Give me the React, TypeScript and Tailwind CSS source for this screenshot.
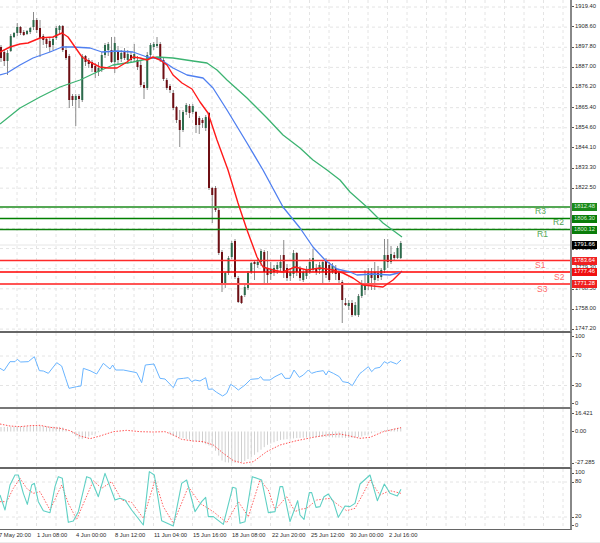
const candles: [number, number, number, number, number][] = [
[47,58,45,62,0],[52,61,50,66,0],[53,61,50,75,1],[36,51,34,52,1],[33,37,32,38,1],[27,33,23,36,1],[27,33,26,35,0],[32,35,30,36,0],[31,34,30,35,1],[28,32,27,34,1],
[20,27,12,30,1],[20,30,18,33,0],[28,38,20,57,0],[36,40,34,45,0],[39,44,37,48,0],[41,47,38,52,0],[39,45,37,50,1],[28,38,26,40,1],[26,30,25,34,1],[26,50,25,52,0],
[50,58,46,60,0],[56,100,54,108,0],[96,100,94,106,0],[96,100,94,126,1],[96,99,94,108,0],[56,100,54,102,1],[56,62,55,66,0],[60,64,58,68,0],[62,68,60,72,0],[66,72,63,78,0],
[68,72,62,76,1],[55,70,52,72,1],[45,55,43,58,1],[44,50,42,56,1],[50,62,37,63,0],[43,62,37,73,1],[52,60,46,64,0],[53,59,50,62,1],[52,58,48,60,0],[54,60,50,64,1],
[55,60,52,63,0],[54,59,44,62,1],[60,67,56,70,0],[65,85,60,87,0],[85,88,82,99,0],[55,88,52,90,1],[45,55,43,58,1],[44,47,42,50,1],[44,46,37,48,1],[44,60,42,62,0],
[60,79,58,81,0],[80,88,78,90,0],[86,90,84,93,0],[93,108,90,110,0],[107,120,106,123,0],[120,130,110,147,0],[112,130,110,132,1],[105,112,103,115,1],[106,113,104,118,0],[106,112,104,114,1],
[112,125,111,133,0],[118,125,116,134,0],[120,123,118,128,0],[117,128,115,131,1],[113,188,112,190,0],[188,195,187,223,0],[188,210,186,212,0],[210,253,208,255,0],[252,285,250,292,0],[273,285,272,288,1],
[258,273,256,275,1],[243,257,241,259,1],[241,277,239,279,0],[278,302,276,303,0],[296,303,295,304,0],[287,295,285,297,1],[273,288,271,290,1],[263,272,262,274,1],[262,264,260,280,0],[262,265,258,268,1],
[251,262,249,266,1],[252,272,250,284,0],[268,275,251,284,0],[270,274,262,280,1],[268,272,265,276,1],[265,269,262,274,1],[262,268,255,272,1],[255,272,240,278,0],[268,278,264,281,0],[272,276,268,281,1],
[253,274,250,278,1],[253,272,252,276,0],[268,278,266,281,0],[272,280,270,282,1],[270,276,266,279,1],[262,272,258,274,1],[258,270,249,272,1],[268,272,264,275,0],[265,270,262,274,1],[262,272,260,285,1],
[260,275,258,278,0],[265,280,262,282,0],[266,272,263,274,1],[268,274,265,280,0],[272,280,270,283,0],[282,300,280,323,0],[303,305,298,306,0],[303,306,300,310,1],[303,315,300,317,0],[305,315,302,316,1],
[296,315,294,317,1],[285,296,280,298,1],[283,290,270,295,1],[273,285,268,290,1],[273,278,268,290,0],[272,280,262,290,1],[273,278,266,281,0],[270,277,268,280,1],[255,270,239,273,1],[255,262,239,268,0],
[254,262,246,264,1],[255,258,252,260,0],[248,258,246,259,1],[243,258,241,259,1],
];
const xAt = (i: number) => 1 + i * 3.25;
const vGrid = Array.from({ length: 29 }, (_, i) => 17 + 19.5 * i);
const hGrid = Array.from({ length: 17 }, (_, i) => 7 + 20.13 * i);
const pts = (s: string, ox: number, oy: number) =>
  s.trim().split(/\s+/).map((p) => { const [a, b] = p.split(","); return `${ox + +a / 3},${oy + +b / 3}`; }).join(" ");

const red = "0,52 10,47 20,44 28,43 40,38 53,37 62,33 68,37 75,47 82,57 90,62 100,67 108,68 117,68 127,62 133,57 140,58 147,60 153,57 160,60 167,65 173,75 182,83 192,89 200,102 208,113 217,140 228,170 238,203 247,230 257,257 263,267 273,270 283,272 295,267 307,270 320,268 333,270 343,273 353,278 363,285 383,287 393,280 402,271";
const blue = "0,75 7,73 20,65 33,58 50,52 62,47 73,47 90,48 102,52 117,51 133,52 147,57 160,59 173,68 187,75 203,78 213,88 227,110 247,143 263,170 283,207 300,228 313,247 325,260 337,269 350,272 357,275 373,274 390,275 402,272";
const green = "0,124 20,108 40,97 60,87 80,80 97,72 113,65 133,62 147,59 157,57 173,58 193,61 207,63 217,70 227,80 247,98 267,118 283,135 300,148 313,160 327,170 340,180 350,192 368,208 383,223 402,237";

const rsi = pts("0,115 12,122 30,95 45,95 52,88 62,96 85,95 103,80 118,122 130,123 145,130 170,98 185,108 197,145 207,175 230,170 243,168 250,115 270,122 290,132 310,100 330,117 338,105 347,120 370,120 410,128 425,158 436,105 462,102 480,145 495,147 520,173 532,147 550,145 565,143 575,155 585,150 600,153 610,147 617,143 625,178 637,177 650,187 668,198 680,190 692,163 703,170 715,180 735,165 752,148 775,146 782,140 790,150 810,150 825,140 845,130 855,145 870,145 882,120 898,142", 0, 330)
  + " " + pts("10,135 25,120 35,130 50,125 70,122 78,135 85,123 100,130 118,140 128,155 145,158 157,167 170,145 180,130 187,125 205,110 215,125 225,115 240,112 253,95 262,100 272,95 290,102 303,90", 300, 330);
const macdSig = pts("0,282 30,288 60,290 90,287 120,286 150,292 180,295 210,302 240,318 270,326 300,318 340,305 380,301 420,305 460,306 495,305 520,315 545,328 580,333 610,335 640,345 670,370 700,392 730,400 760,395 800,365 840,345 890,332", 0, 330)
  + " " + pts("0,330 40,322 80,315 120,312 150,318 180,325 210,322 250,305 303,293", 300, 330);
const stoch = pts("0,105 15,150 30,75 45,45 55,45 70,100 82,133 95,75 103,70 115,125 130,152 150,158 165,80 175,50 187,55 205,187 220,183 235,155 260,50 272,55 295,110 315,40 330,80 345,120 360,115 375,120 395,150 430,195 448,35 463,45 485,182 520,198 545,70 560,60 585,155 605,125 617,112 625,170 640,170 670,193 698,82 708,85 720,190 735,185 757,50 785,60 805,158 825,155 840,80 848,80 870,185 893,122", 0, 460)
  + " " + pts("0,165 12,178 28,98 35,98 48,142 60,140 72,110 85,102 100,125 115,172 135,138 150,140 165,130 180,72 210,45 232,122 253,72 270,100 292,108 303,88", 300, 460);
const stochSig = pts("0,125 20,125 40,85 60,55 80,85 100,100 120,95 150,150 185,75 205,130 230,178 255,120 280,62 305,85 335,65 365,120 395,127 430,175 465,60 490,140 520,190 565,80 600,130 640,155 680,188 715,125 745,170 780,60 805,90 825,150 860,110 885,155", 0, 460)
  + " " + pts("0,148 20,145 50,120 90,115 115,135 140,152 165,145 190,100 210,60 240,105 270,92 303,100", 300, 460);

const histKnots: [number, number][] = [[0,427],[40,426],[62,427],[72,433],[80,440],[90,436],[100,431.5],[167,431.5],[173,436],[200,442],[213,447],[223,462],[233,463],[243,462],[253,456],[267,445],[280,440],[297,438],[320,437],[350,438],[360,437],[377,431.5],[402,427]];
const histAt = (x: number) => {
  for (let i = 1; i < histKnots.length; i++) {
    const [a, u] = histKnots[i - 1];
    const [b, v] = histKnots[i];
    if (x <= b) return u + ((v - u) * (x - a)) / (b - a);
  }
  return 427;
};

function Grid({ top, bottom, lines }: { top: number; bottom: number; lines: number[] }) {
  return (
    <g stroke="#e4e4e4" strokeWidth="1" strokeDasharray="3 3" fill="none">
      {vGrid.map((x) => <line key={x} x1={x} x2={x} y1={top} y2={bottom} />)}
      {lines.map((y) => <line key={y} x1={0} x2={570} y1={y} y2={y} />)}
    </g>
  );
}

const ticks = [
  ["1919.40", 6.5], ["1908.60", 26.5], ["1897.80", 47], ["1887.00", 67], ["1876.20", 87], ["1865.40", 107.5], ["1854.60", 127.5], ["1844.10", 147.5], ["1833.30", 168], ["1822.50", 188],
  ["1790.10", 249], ["1779.30", 268], ["1768.50", 289], ["1758.00", 309], ["1747.20", 329],
] as [string, number][];
const boxes: [string, number, string][] = [
  ["1812.48", 207, "bg-[#1c8a1c] text-[#d8f0d8]"], ["1806.30", 218.5, "bg-[#0a7d0a] text-[#d8f0d8]"], ["1800.12", 229.5, "bg-[#0a7d0a] text-[#d8f0d8]"],
  ["1791.66", 245, "bg-black text-white"], ["1783.64", 260.5, "bg-[#f02020] text-white"], ["1777.46", 272, "bg-[#f01010] text-white"], ["1771.28", 284, "bg-[#f02020] text-white"],
];
const levels: [number, string, number][] = [
  [207, "#55a855", 1.8], [218.5, "#008000", 1.5], [229.5, "#0c800c", 1.5], [260.5, "#ff2a2a", 1.5], [272, "#ff0000", 1.5], [284, "#ff5555", 1.8],
];
const srLabels: [string, number, number, string][] = [
  ["R3", 535, 211, "text-[#55a855]"], ["R2", 553, 222.5, "text-[#4f9f4f]"], ["R1", 537, 234, "text-[#55a855]"],
  ["S1", 535, 265, "text-[#ff6a6a]"], ["S2", 554, 277, "text-[#ff6a6a]"], ["S3", 537, 289, "text-[#ff6a6a]"],
];

function AxisLabel({ text, y, offset }: { text: string; y: number; offset: number }) {
  return (
    <div className="absolute left-0 flex items-center gap-px h-[8px] text-[5.8px] leading-none text-[#2a2a2a]" style={{ top: y - offset - 4 }}>
      <span className="w-[2px] h-px bg-[#555]" />
      <span>{text}</span>
    </div>
  );
}

const times: [string, number][] = [
  ["7 May 20:00", -1], ["1 Jun 08:00", 37], ["4 Jun 00:00", 76], ["8 Jun 12:00", 115], ["11 Jun 04:00", 154], ["15 Jun 16:00", 193], ["18 Jun 08:00", 232], ["22 Jun 20:00", 272], ["25 Jun 12:00", 311], ["30 Jun 00:00", 350], ["2 Jul 16:00", 389],
];

export default function App() {
  return (
    <div className="w-[600px] h-[543px] bg-white flex flex-col overflow-hidden font-['Liberation_Sans',Arial,sans-serif]">
      <div className="flex h-[333px]">
        <div className="relative w-[572px] h-full border-r-2 border-r-[#888] border-b-2 border-b-[#666]">
          <svg width="570" height="331" viewBox="0 0 570 331" className="block blur-[0.3px]">
            <Grid top={0} bottom={331} lines={hGrid} />
            <line x1="0" x2="570" y1="245" y2="245" stroke="#e6e6e6" strokeWidth="1" />
            {candles.map(([bt, bb, wt, wb, up], i) => {
              const x = xAt(i);
              return (
                <g key={i}>
                  <line x1={x} x2={x} y1={wt} y2={wb} stroke="#8a8a8a" strokeWidth="1" />
                  <rect x={x - 1} y={bt} width="2" height={bb - bt} fill={up ? "#2c6b4c" : "#6e0f14"} />
                </g>
              );
            })}
            {levels.map(([y, c, w]) => <line key={y} x1="0" x2="570" y1={y} y2={y} stroke={c} strokeWidth={w} />)}
            <polyline points={green} fill="none" stroke="#3cb371" strokeWidth="1.3" strokeLinejoin="round" />
            <polyline points={blue} fill="none" stroke="#4f7ff0" strokeWidth="1.3" strokeLinejoin="round" />
            <polyline points={red} fill="none" stroke="#ff1a1a" strokeWidth="1.4" strokeLinejoin="round" />
          </svg>
          {srLabels.map(([t, x, y, c]) => (
            <span key={t} className={`absolute text-[8.5px] leading-none ${c}`} style={{ left: x, top: y - 4.5 }}>{t}</span>
          ))}
        </div>
        <div className="relative flex-1">
          {ticks.map(([t, y]) => <AxisLabel key={t} text={t} y={y} offset={0} />)}
          {boxes.map(([t, y, c]) => (
            <div key={t} className={`absolute left-0 w-[25px] h-[8px] flex items-center justify-center text-[5.8px] leading-none ${c}`} style={{ top: y - 4 }}>{t}</div>
          ))}
        </div>
      </div>

      <div className="flex h-[76px]">
        <div className="w-[572px] h-full border-r-2 border-r-[#888] border-b-2 border-b-[#777]">
          <svg width="570" height="74" viewBox="0 333 570 74" className="block blur-[0.3px]">
            <Grid top={333} bottom={407} lines={[356, 385.5]} />
            <polyline points={rsi} fill="none" stroke="#69b4ff" strokeWidth="1" strokeLinejoin="round" />
          </svg>
        </div>
        <div className="relative flex-1">
          <AxisLabel text="100" y={336.5} offset={333} />
          <AxisLabel text="70" y={356} offset={333} />
          <AxisLabel text="30" y={385.5} offset={333} />
          <AxisLabel text="0" y={403.5} offset={333} />
        </div>
      </div>

      <div className="flex h-[60px]">
        <div className="w-[572px] h-full border-r-2 border-r-[#888] border-b-2 border-b-[#666]">
          <svg width="570" height="58" viewBox="0 409 570 58" className="block blur-[0.3px]">
            <Grid top={409} bottom={467} lines={[]} />
            {candles.map((_, i) => <line key={i} x1={xAt(i)} x2={xAt(i)} y1={431.5} y2={histAt(xAt(i))} stroke="#cfcfcf" strokeWidth="1" />)}
            <polyline points={macdSig} fill="none" stroke="#ff4040" strokeWidth="0.9" strokeDasharray="1.5 1.5" />
          </svg>
        </div>
        <div className="relative flex-1">
          <AxisLabel text="16.421" y={413.5} offset={409} />
          <AxisLabel text="0.00" y={431.5} offset={409} />
          <AxisLabel text="-27.285" y={463} offset={409} />
        </div>
      </div>

      <div className="flex h-[61px]">
        <div className="w-[572px] h-full border-r-2 border-r-[#888] border-b border-b-[#666]">
          <svg width="570" height="60" viewBox="0 469 570 60" className="block blur-[0.3px]">
            <Grid top={469} bottom={529} lines={[482, 517]} />
            <polyline points={stochSig} fill="none" stroke="#ff5050" strokeWidth="0.9" strokeDasharray="1.5 1.5" strokeLinejoin="round" />
            <polyline points={stoch} fill="none" stroke="#5fd0c4" strokeWidth="1.1" strokeLinejoin="round" />
          </svg>
        </div>
        <div className="relative flex-1">
          <AxisLabel text="100" y={473} offset={469} />
          <AxisLabel text="80" y={482} offset={469} />
          <AxisLabel text="20" y={517} offset={469} />
          <AxisLabel text="0" y={525.5} offset={469} />
        </div>
      </div>

      <div className="relative h-[13px] border-b border-b-[#ececec]">
        {times.map(([t, x]) => (
          <span key={t} className="absolute top-px whitespace-nowrap text-[5.8px] leading-[8px] text-[#2a2a2a]" style={{ left: x }}>{t}</span>
        ))}
      </div>
    </div>
  );
}
